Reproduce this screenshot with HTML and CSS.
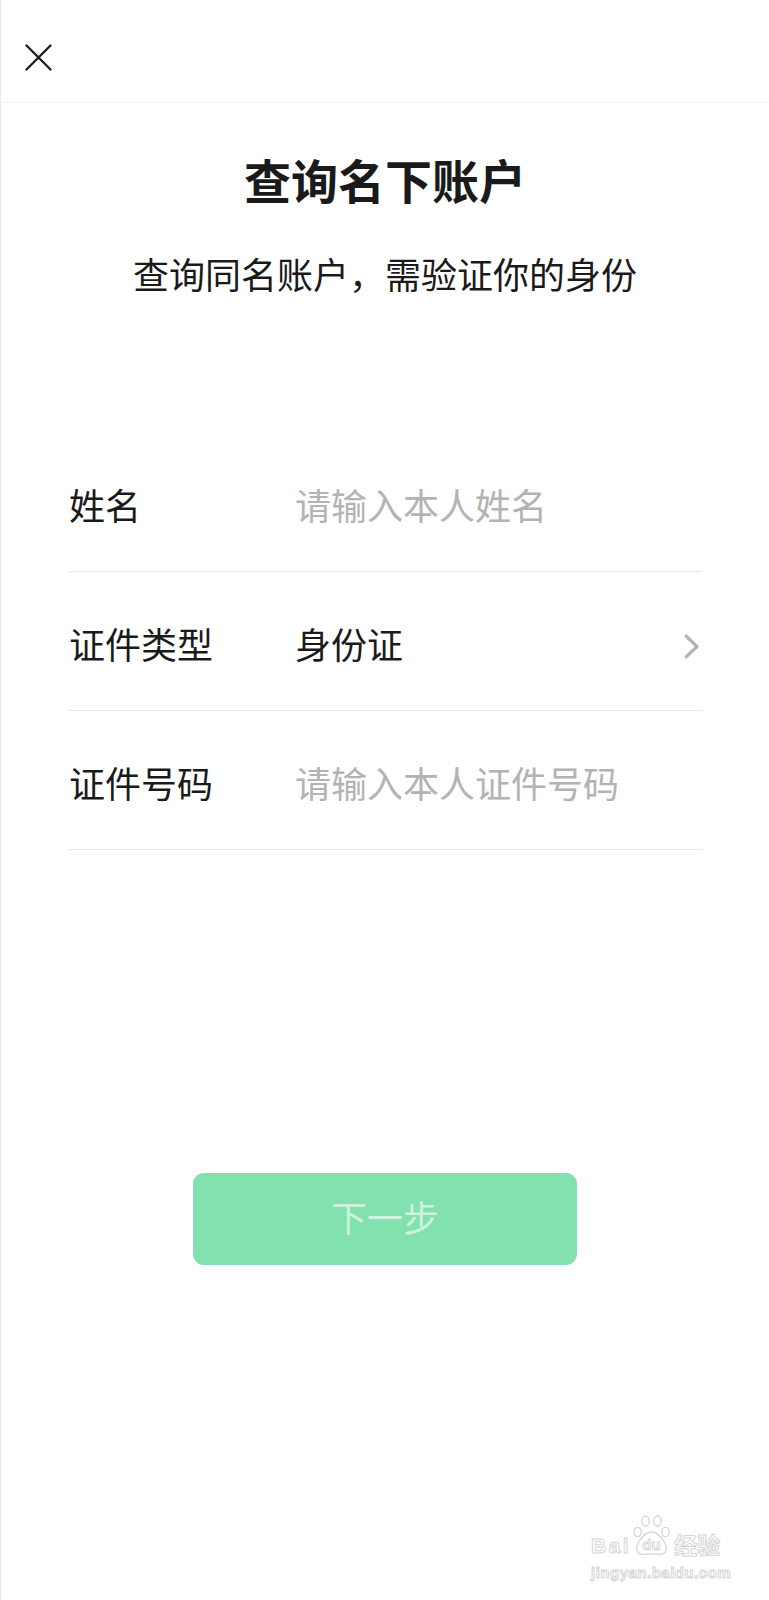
FILE: index.html
```html
<!DOCTYPE html>
<html lang="zh-CN">
<head>
<meta charset="utf-8">
<title>查询名下账户</title>
<link rel="stylesheet" href="styles.css">
</head>
<body>
<div class="page">
  <header class="topbar">
    <svg class="close" width="27" height="27" viewBox="0 0 27 27" aria-label="关闭">
      <path d="M1.5 1.5 L25.5 25.5 M25.5 1.5 L1.5 25.5" stroke="#1a1a1a" stroke-width="2.3" fill="none" stroke-linecap="round"/>
    </svg>
  </header>

  <h1 class="title">查询名下账户</h1>
  <p class="subtitle">查询同名账户，需验证你的身份</p>

  <div class="form">
    <div class="row">
      <span class="label">姓名</span>
      <span class="value placeholder">请输入本人姓名</span>
    </div>
    <div class="row">
      <span class="label">证件类型</span>
      <span class="value">身份证</span>
      <svg class="chevron" width="17" height="27" viewBox="0 0 17 27">
        <path d="M3 3 L14 13.5 L3 24" stroke="#b5b5b5" stroke-width="3.2" fill="none" stroke-linecap="round" stroke-linejoin="round"/>
      </svg>
    </div>
    <div class="row">
      <span class="label">证件号码</span>
      <span class="value placeholder">请输入本人证件号码</span>
    </div>
  </div>

  <div class="actions">
    <button class="next" type="button">下一步</button>
  </div>

  <div class="watermark">
    <div class="wm-top">
      <span class="wm-bai">Bai</span>
      <span class="wm-paw">
        <svg width="42" height="42" viewBox="0 0 42 42">
          <g fill="none" stroke="#d6d6d6" stroke-width="1.3">
            <ellipse cx="6.5" cy="17" rx="3.6" ry="4.6"/>
            <ellipse cx="14.5" cy="6" rx="3.8" ry="5"/>
            <ellipse cx="26.5" cy="6" rx="3.8" ry="5"/>
            <ellipse cx="34.5" cy="17" rx="3.6" ry="4.6"/>
            <path d="M20.5 17 C28 17 37 29 35 36 C33 41 26 39 20.5 39 C15 39 8 41 6 36 C4 29 13 17 20.5 17 Z"/>
          </g>
        </svg>
        <span class="wm-du">du</span>
      </span>
      <span class="wm-jy">经验</span>
    </div>
    <div class="wm-url">jingyan.baidu.com</div>
  </div>
</div>
</body>
</html>
```

FILE: styles.css
```css
* {
  box-sizing: border-box;
}

html, body {
  margin: 0;
  padding: 0;
  background: #ffffff;
}

body {
  font-family: "Noto Sans CJK SC", "Noto Sans", "Liberation Sans", sans-serif;
  color: #1a1a1a;
}

.page {
  position: relative;
  min-height: 1600px;
  border-left: 1px solid #e9e9e9;
}

.topbar {
  height: 103px;
  padding: 44px 0 0 24px;
  border-bottom: 1px solid #f3f3f3;
}

.close {
  display: block;
}

.title {
  margin: 43px 0 0;
  font-size: 47px;
  line-height: 66px;
  font-weight: 700;
  text-align: center;
  color: #1a1a1a;
}

.subtitle {
  margin: 36px 0 0;
  font-size: 36px;
  line-height: 50px;
  font-weight: 400;
  text-align: center;
  color: #1a1a1a;
}

.form {
  margin: 135px 67px 0 68px;
}

.row {
  display: flex;
  align-items: center;
  height: 139px;
  padding: 4px 0 0;
  border-bottom: 1px solid #e6e6e6;
}

.label {
  width: 226px;
  flex: none;
  font-size: 36px;
  line-height: 50px;
  color: #1a1a1a;
}

.value {
  flex: 1;
  font-size: 36px;
  line-height: 50px;
  color: #1a1a1a;
}

.value.placeholder {
  color: #b3b3b3;
}

.chevron {
  flex: none;
  margin: 6px 2px 0 0;
}

.actions {
  display: flex;
  justify-content: center;
  margin-top: 323px;
}

.next {
  width: 384px;
  height: 92px;
  border: none;
  border-radius: 11px;
  background: #83e0af;
  color: #cdf3df;
  font-family: "Noto Sans CJK SC", "Noto Sans", sans-serif;
  font-size: 36px;
  line-height: 50px;
  padding: 0 0 7px;
}

.watermark {
  position: absolute;
  left: 590px;
  top: 1515px;
  width: 140px;
  color: transparent;
  -webkit-text-stroke: 1px #d6d6d6;
  font-family: "Liberation Sans", sans-serif;
}

.wm-top {
  display: flex;
  align-items: flex-end;
  height: 42px;
}

.wm-bai {
  font-size: 21px;
  font-weight: 700;
  line-height: 20px;
  letter-spacing: 2.5px;
  margin-bottom: 1px;
}

.wm-paw {
  position: relative;
  width: 42px;
  height: 42px;
}

.wm-paw svg {
  display: block;
}

.wm-du {
  position: absolute;
  left: 11px;
  top: 22px;
  font-size: 15px;
  line-height: 16px;
  font-weight: 700;
}

.wm-jy {
  font-family: "Noto Sans CJK SC", sans-serif;
  font-size: 23px;
  line-height: 26px;
  font-weight: 700;
  margin-left: 1px;
}

.wm-url {
  margin-top: 7px;
  font-size: 15px;
  line-height: 17px;
  font-weight: 700;
  letter-spacing: 0.5px;
}
```
